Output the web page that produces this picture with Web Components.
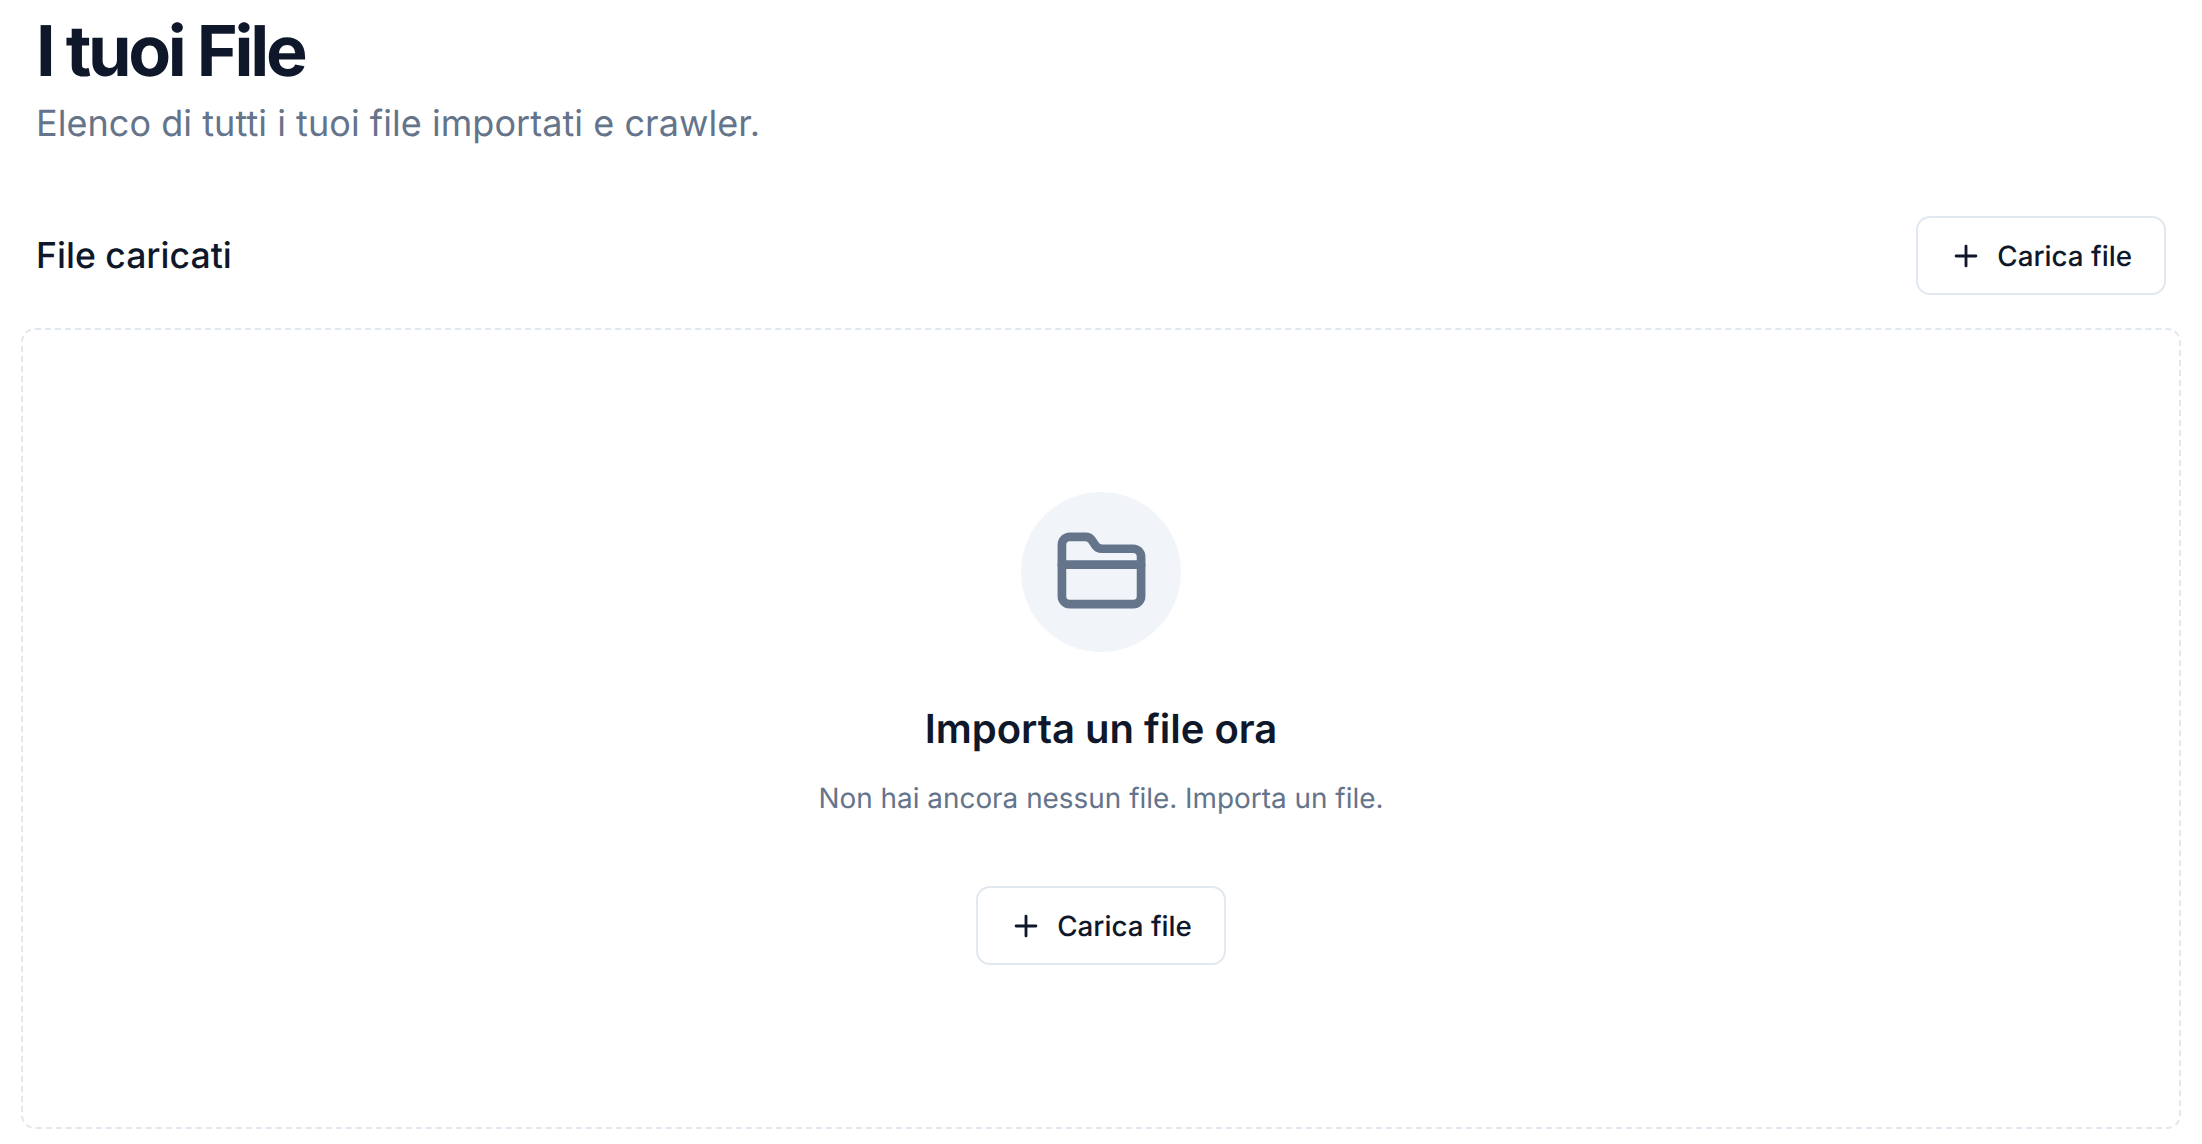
<!DOCTYPE html>
<html lang="it">
<head>
<meta charset="utf-8">
<title>I tuoi File</title>
<style>
  html, body { margin: 0; background: #fff; }
  body { font-family: Inter, "Liberation Sans", sans-serif; color: #0f172a; text-rendering: geometricPrecision; }
</style>
</head>
<body>
<files-page>
  <page-header slot="header" subtitle="Elenco di tutti i tuoi file importati e crawler.">I tuoi File</page-header>
  <section-bar slot="bar">
    File caricati
    <add-button slot="action">Carica file</add-button>
  </section-bar>
  <empty-state slot="empty" heading="Importa un file ora" message="Non hai ancora nessun file. Importa un file.">
    <add-button>Carica file</add-button>
  </empty-state>
</files-page>

<script>
class filesPage extends HTMLElement {
    constructor() {
        super();
        this.attachShadow({ mode: 'open' });
        this.shadowRoot.innerHTML = `<style>
        :host {
          display: block;
          box-sizing: border-box;
          width: 2202px;
          height: 1144px;
          padding: 0 21px 16px;
          overflow: hidden;
        }
        .head { padding: 0 15px; }
      </style>
      <div class="head">
        <slot name="header"></slot>
        <slot name="bar"></slot>
      </div>
      <slot name="empty"></slot>`;
    }
}

class pageHeader extends HTMLElement {
    constructor() {
        super();
        this.attachShadow({ mode: 'open' });
        this.shadowRoot.innerHTML = `<style>
        :host { display: block; padding-top: 14px; }
        h1 {
          margin: 0;
          font-size: 70px;
          line-height: 74px;
          font-weight: 700;
          letter-spacing: -3.3px;
          color: #0f172a;
        }
        p {
          margin: 0;
          padding-top: 10px;
          font-size: 36px;
          line-height: 50px;
          letter-spacing: 0.05px;
          color: #64748b;
        }
      </style>
      <h1><slot></slot></h1>
      <p>${this.getAttribute('subtitle')}</p>`;
    }
}

class sectionBar extends HTMLElement {
    constructor() {
        super();
        this.attachShadow({ mode: 'open' });
        this.shadowRoot.innerHTML = `<style>
        :host {
          display: flex;
          align-items: center;
          justify-content: space-between;
          margin-top: 68px;
          font-size: 35.6px;
          font-weight: 500;
          color: #0f172a;
        }
      </style>
      <span><slot></slot></span>
      <slot name="action"></slot>`;
    }
}

class addButton extends HTMLElement {
    constructor() {
        super();
        this.attachShadow({ mode: 'open' });
        this.shadowRoot.innerHTML = `<style>
        :host { display: inline-flex; }
        button {
          display: inline-flex;
          align-items: center;
          gap: 14px;
          box-sizing: border-box;
          height: 79px;
          padding: 0 32px 0 31px;
          background: #fff;
          border: 2px solid #e2e8f0;
          border-radius: 14px;
          font: 500 27.8px Inter, "Liberation Sans", sans-serif;
          text-rendering: geometricPrecision;
          color: #0f172a;
        }
        svg { width: 34px; height: 34px; flex: none; }
      </style>
      <button>
        <svg viewBox="0 0 24 24" fill="none" stroke="currentColor" stroke-width="2" stroke-linecap="round" stroke-linejoin="round"><path d="M5 12h14"/><path d="M12 5v14"/></svg>
        <slot></slot>
      </button>`;
    }
}

class emptyState extends HTMLElement {
    constructor() {
        super();
        this.attachShadow({ mode: 'open' });
        this.shadowRoot.innerHTML = `<style>
        :host {
          display: flex;
          flex-direction: column;
          align-items: center;
          justify-content: center;
          box-sizing: border-box;
          height: 801px;
          margin-top: 33px;
          border: 2px dashed #e2e8f0;
          border-radius: 14px;
        }
        .circle {
          display: flex;
          align-items: center;
          justify-content: center;
          width: 160px;
          height: 160px;
          border-radius: 50%;
          background: #f1f5f9;
          color: #64748b;
        }
        svg { width: 95px; height: 95px; }
        h3 {
          margin: 49px 0 0;
          font-size: 40px;
          line-height: 56px;
          font-weight: 600;
          color: #0f172a;
        }
        p {
          margin: 21px 0 68px;
          font-size: 27.9px;
          line-height: 40px;
          color: #64748b;
        }
      </style>
      <div class="circle">
        <svg viewBox="0 0 24 24" fill="none" stroke="currentColor" stroke-width="2.2" stroke-linecap="round" stroke-linejoin="round"><path d="M20 20a2 2 0 0 0 2-2V8a2 2 0 0 0-2-2h-7.9a2 2 0 0 1-1.69-.9L9.6 3.9A2 2 0 0 0 7.93 3H4a2 2 0 0 0-2 2v13a2 2 0 0 0 2 2Z"/><path d="M2 10h20"/></svg>
      </div>
      <h3>${this.getAttribute('heading')}</h3>
      <p>${this.getAttribute('message')}</p>
      <slot></slot>`;
    }
}

customElements.define('files-page', filesPage);
customElements.define('page-header', pageHeader);
customElements.define('section-bar', sectionBar);
customElements.define('add-button', addButton);
customElements.define('empty-state', emptyState);
</script>
</body>
</html>
